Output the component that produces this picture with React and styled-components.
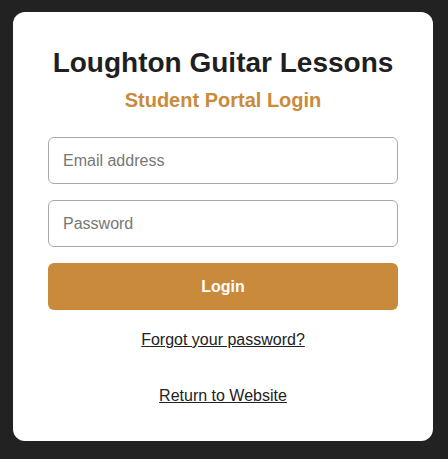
import styled, { createGlobalStyle } from 'styled-components'

const GlobalStyle = createGlobalStyle`
  body {
    margin: 0;
    background: #222222;
    font-family: "Liberation Sans", Arial, sans-serif;
  }
`

const Page = styled.div`
  display: flex;
  justify-content: flex-start;
  padding: 12px 15px 19px 13px;
`

const Card = styled.div`
  width: 420px;
  box-sizing: border-box;
  background: #ffffff;
  border-radius: 12px;
  padding: 35px 35px 36px;
  display: flex;
  flex-direction: column;
  align-items: stretch;
`

const Title = styled.h1`
  margin: 0;
  text-align: center;
  font-size: 28px;
  line-height: 32px;
  font-weight: 700;
  color: #1f1f1f;
`

const Subtitle = styled.h2`
  margin: 10px 0 0;
  text-align: center;
  font-size: 20px;
  line-height: 23px;
  font-weight: 700;
  color: #c98b3b;
`

const Form = styled.form`
  display: flex;
  flex-direction: column;
  gap: 16px;
  margin-top: 25px;
`

const Input = styled.input`
  height: 47px;
  box-sizing: border-box;
  border: 1px solid #aaaaaa;
  border-radius: 6px;
  padding: 0 14px;
  font-family: inherit;
  font-size: 16px;
  color: #222;
  outline: none;

  &::placeholder {
    color: #777777;
  }
`

const Button = styled.button`
  height: 47px;
  border: none;
  border-radius: 6px;
  background: #c98b3b;
  color: #ffffff;
  font-family: inherit;
  font-size: 16px;
  font-weight: 700;
  cursor: pointer;
`

const Links = styled.div`
  display: flex;
  flex-direction: column;
  align-items: center;
  gap: 38px;
  margin-top: 21px;
`

const TextLink = styled.a`
  color: #222222;
  font-size: 16px;
  line-height: 18px;
  text-decoration: underline;
  cursor: pointer;
`

export default function App() {
  return (
    <>
      <GlobalStyle />
      <Page>
        <Card>
          <Title>Loughton Guitar Lessons</Title>
          <Subtitle>Student Portal Login</Subtitle>
          <Form onSubmit={(e) => e.preventDefault()}>
            <Input type='email' placeholder='Email address' />
            <Input type='password' placeholder='Password' />
            <Button type='submit'>Login</Button>
          </Form>
          <Links>
            <TextLink>Forgot your password?</TextLink>
            <TextLink>Return to Website</TextLink>
          </Links>
        </Card>
      </Page>
    </>
  )
}
